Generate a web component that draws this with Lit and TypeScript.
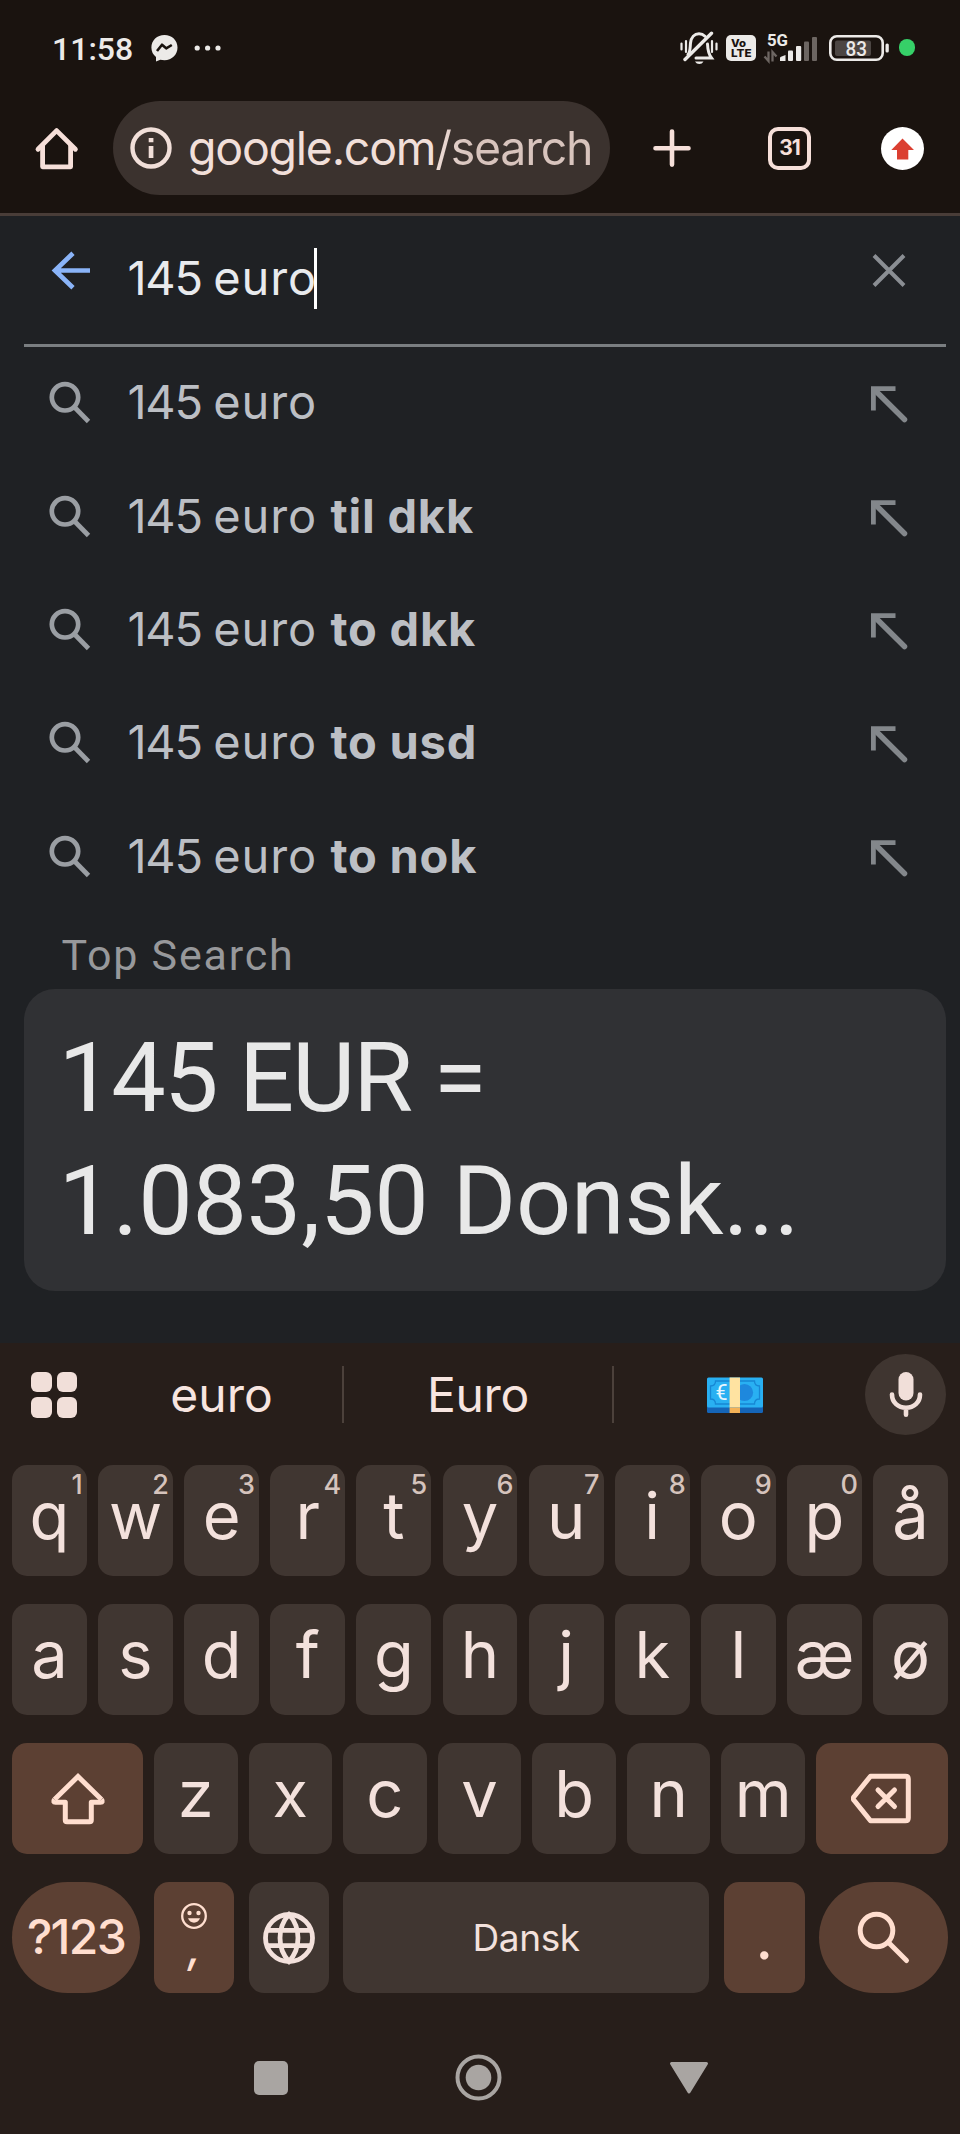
import { LitElement, html, css, nothing } from 'lit';
import { customElement, property } from 'lit/decorators.js';

const INTER = css`"Inter", "Roboto", sans-serif`;
const ROBOTO = css`"Roboto", "Inter", sans-serif`;

@customElement('status-bar')
class StatusBar extends LitElement {
  static styles = css`
    :host { display: flex; align-items: center; height: 95px; padding: 0 45px 0 52px; box-sizing: border-box; color: #eceae8; }
    svg { display: block; flex: none; }
    .time { font: 500 32px/40px ${ROBOTO}; width: 99px; padding-top: 3px; }
    .dots { margin-left: 16px; }
    .spacer { flex: 1; }
    .volte { margin-left: 8px; }
    .signal { margin-left: 7px; }
    .battery { margin-left: 10px; }
    .dot { width: 16.5px; height: 16.5px; border-radius: 50%; background: #36d068; margin-left: 10px; }
    .vo { font: 800 10.5px ${INTER}; }
    .g5 { font: 700 16.5px ${ROBOTO}; }
    .lvl { font: 500 20.5px ${ROBOTO}; }
  `;
  render() {
    return html`
      <div class="time">11:58</div>
      <svg width="27" height="28" viewBox="0 0 27 28">
        <path fill="#eceae8" d="M13.5 1C6 1 .4 6.400.4 13.600c0 4 1.700 7.200 4.600 9.500v4.300l4.300-1.600c1.300.3 2.700.5 4.200.5 7.400 0 13-5.400 13-12.700S20.900 1 13.500 1z"/>
        <path d="M6 17l5-6.300 4.200 3.600 5.600-3.300" fill="none" stroke="#1a130f" stroke-width="2.600" stroke-linejoin="round"/>
      </svg>
      <svg class="dots" width="28" height="6" viewBox="0 0 28 6" fill="#eceae8">
        <circle cx="3.200" cy="3" r="2.600"/><circle cx="13.600" cy="3" r="2.600"/><circle cx="24" cy="3" r="2.600"/>
      </svg>
      <div class="spacer"></div>
      <svg width="38" height="34" viewBox="0 0 38 34" fill="none" stroke="#eceae8" stroke-width="3" stroke-linecap="round">
        <path d="M8 23.500c2.500-3 2-6.500 2.500-11.500.6-5.500 4-9.300 8.500-9.300 2.500 0 4.500 1 6 2.500"/>
        <path d="M27.500 13c.3 7 1 10 4 14H16"/>
        <path d="M5 28.500L31.500 2.200" stroke-width="3.400"/>
        <path d="M15 30.500h8.500c-1 1.700-2.500 2.500-4.200 2.500s-3.300-.8-4.300-2.500z" fill="#eceae8" stroke="none"/>
        <path d="M1.500 12.500v6M6 10v11M32 10v11M36.500 12.500v6" stroke-width="2.200"/>
      </svg>
      <svg class="volte" width="30" height="26" viewBox="0 0 30 26">
        <rect width="30" height="26" rx="5" fill="#eceae8"/>
        <text class="vo" x="5" y="11.500" textLength="15" lengthAdjust="spacingAndGlyphs" fill="#1a130f">Vo</text>
        <text class="vo" x="5" y="21.800" textLength="20.500" lengthAdjust="spacingAndGlyphs" fill="#1a130f">LTE</text>
      </svg>
      <svg class="signal" width="56" height="40" viewBox="0 -6 56 40">
        <text class="g5" x="4" y="12" textLength="21" lengthAdjust="spacingAndGlyphs" fill="#eceae8">5G</text>
        <path d="M5.500 17.500v9.500l-4-4.500M9.500 27.500V18l4 4.500" fill="none" stroke="#6d6662" stroke-width="2.300"/>
        <path d="M17 27v-3q0-1 1-1.300l4.500-1.700v6z" fill="#eceae8"/>
        <rect x="25" y="16.500" width="5" height="10.500" rx="1" fill="#eceae8"/>
        <rect x="33" y="12" width="5.200" height="15" rx="1" fill="#eceae8"/>
        <rect x="41" y="7.500" width="5" height="19.500" rx="1" fill="#6d6662"/>
        <rect x="49" y="3" width="5" height="24" rx="1" fill="#6d6662"/>
      </svg>
      <svg class="battery" width="60" height="26" viewBox="0 0 60 26">
        <rect x="1.300" y="1.300" width="52.400" height="23.400" rx="6.500" fill="none" stroke="#eceae8" stroke-width="2.600"/>
        <rect x="6" y="5.500" width="36" height="15.500" rx="2" fill="#4c4643"/>
        <rect x="56.500" y="8.500" width="3.300" height="9" rx="1.500" fill="#eceae8"/>
        <text class="lvl" x="16.500" y="21" textLength="21.500" lengthAdjust="spacingAndGlyphs" fill="#eceae8">83</text>
      </svg>
      <div class="dot"></div>`;
  }
}

@customElement('browser-bar')
class BrowserBar extends LitElement {
  static styles = css`
    :host { display: flex; align-items: center; height: 121px; box-sizing: border-box; padding: 6px 34px 18px 34px; border-bottom: 3px solid #493d38; }
    svg { display: block; flex: none; }
    .pill { display: flex; align-items: center; width: 497px; height: 94px; border-radius: 47px; background: #3b322e; margin-left: 34px; box-sizing: border-box; padding-left: 17px; }
    .url { font: 400 46.5px/60px ${INTER}; letter-spacing: -1.25px; margin-left: 16px; white-space: nowrap; color: #f1dfd9; }
    .path { background: linear-gradient(90deg, #efddd7, #d8c4bd 22%); -webkit-background-clip: text; background-clip: text; color: transparent; }
    .plus { margin-left: 41.500px; }
    .tabs { display: grid; place-items: center; box-sizing: border-box; width: 43px; height: 43px; border: 4.5px solid #f6dfd9; border-radius: 10px; margin-left: 76.500px; font: 700 21px/24px ${INTER}; letter-spacing: -1px; color: #f6dfd9; }
    .upd { margin-left: 70px; }
  `;
  render() {
    return html`
      <svg width="45" height="45" viewBox="0 0 45 45" fill="none" stroke="#f6dfd9" stroke-width="4.800" stroke-linecap="round" stroke-linejoin="round">
        <path d="M4 23.200L22.600 4.600 41.400 23.200"/><path stroke-linecap="butt" d="M8.600 19V40.800H36.600V19"/>
      </svg>
      <div class="pill">
        <svg width="42" height="42" viewBox="0 0 42 42">
          <circle cx="21" cy="21" r="18.500" fill="none" stroke="#f1dfd9" stroke-width="4.400"/>
          <path d="M18.700 11h4.700v4.300h-4.700zM18.700 19h4.700v12h-4.700z" fill="#f1dfd9"/>
        </svg>
        <div class="url">google.com<span class="path">/search</span></div>
      </div>
      <svg class="plus" width="40" height="40" viewBox="0 0 40 40" stroke="#f6dfd9" stroke-width="4.600" stroke-linecap="round"><path d="M20 3.600v33M3.500 20.200h33"/></svg>
      <div class="tabs">31</div>
      <svg class="upd" width="43" height="43" viewBox="0 0 43 43">
        <circle cx="21.500" cy="21.500" r="21.500" fill="#fff"/>
        <path d="M21.500 11.500L33 23h-5.700v9.500H16V23h-5.700z" fill="#db3f31"/>
      </svg>`;
  }
}

const SUGGESTIONS = ['', 'til dkk', 'to dkk', 'to usd', 'to nok'];

@customElement('search-page')
class SearchPage extends LitElement {
  static styles = css`
    :host { display: flex; flex-direction: column; height: 1127px; background: #1f2124; box-sizing: border-box; padding: 0 14px 0 24px; }
    svg { display: block; flex: none; }
    .head { display: flex; align-items: center; height: 131px; box-sizing: border-box; border-bottom: 3px solid #7a7e81; padding: 0 40px 18px 26px; }
    .input { display: flex; align-items: center; font: 400 47px/60px ${INTER}; color: #e8eaed; margin-left: 35.500px; padding-top: 14px; flex: 1; }
    .query { white-space: pre; word-spacing: -2.500px; letter-spacing: .9px; }
    .amount { letter-spacing: -1.300px; }
    .caret { width: 3px; height: 61px; background: #fff; margin-left: -3px; }
    .list { margin-top: -1.300px; }
    .row { display: flex; align-items: center; height: 113.350px; padding: 0 38px 0 25px; color: #bcbfc4; }
    .q { flex: 1; font: 400 47px/60px ${INTER}; margin-left: 35.500px; white-space: pre; }
    .q b { font-weight: 700; font-size: 47px; letter-spacing: .8px; }
    .fill { margin-top: 4px; }
    .label { font: 400 43px/50px ${ROBOTO}; letter-spacing: 1.800px; color: #97989b; padding-left: 37.500px; margin-top: 17.500px; }
    .card { background: #303134; border-radius: 31px; height: 302px; margin-top: 9px; box-sizing: border-box; padding: 28px 0 0 34.500px; font: 400 97px/122.600px ${ROBOTO}; letter-spacing: -.2px; color: #e8e8e8; }
    .first { letter-spacing: -1.800px; }
  `;
  render() {
    const query = html`<span class="query"><span class="amount">145</span> euro</span>`;
    return html`
      <div class="head">
        <svg width="42" height="42" viewBox="0 0 42 42" fill="none" stroke="#8ab4f8" stroke-width="4.700"><path d="M40 20.500H5M23 3.200L5 20.500 23 37.800"/></svg>
        <div class="input">${query}<span class="caret"></span></div>
        <svg width="34" height="34" viewBox="0 0 34 34" stroke="#8a8e93" stroke-width="4"><path d="M2 1.500l30 30M32 1.500L2 31.500"/></svg>
      </div>
      <div class="list">
        ${SUGGESTIONS.map((s) => html`
          <div class="row">
            <svg width="43" height="44" viewBox="0 0 43 44" fill="none" stroke="#9a9ea3" stroke-width="4.700">
              <circle cx="16" cy="17.300" r="13.200"/><path d="M25.300 27L39.500 41.500"/>
            </svg>
            <div class="q">${query}${s ? html` <b>${s}</b>` : nothing}</div>
            <svg class="fill" width="38" height="38" viewBox="0 0 38 38" fill="none" stroke="#83878b" stroke-width="4.800">
              <path d="M25.500 3.600H3.400V25.500"/><path stroke-width="5.500" stroke-linecap="round" d="M5 5.200L34.500 34.500"/>
            </svg>
          </div>`)}
      </div>
      <div class="label">Top Search</div>
      <div class="card"><div class="first">145 EUR =</div><div>1.083,50 Donsk...</div></div>`;
  }
}

@customElement('key-cap')
class KeyCap extends LitElement {
  @property() label = '';
  @property() hint = '';
  static styles = css`
    :host { display: flex; position: relative; align-items: center; justify-content: center; box-sizing: border-box; min-width: 0; padding-bottom: 9.500px; background: #403631; border-radius: 15px; color: #f3e1dc; font: 400 65px/80px ${INTER}; }
    .hint { position: absolute; top: 3px; right: 4px; font: 500 27px/33px ${INTER}; color: #d5c3bc; }
  `;
  render() {
    return html`${this.label}${this.hint ? html`<span class="hint">${this.hint}</span>` : nothing}`;
  }
}

@customElement('soft-keyboard')
class SoftKeyboard extends LitElement {
  static styles = css`
    :host { display: block; height: 791px; background: #271e1a; }
    svg { display: block; flex: none; }
    .strip { display: flex; align-items: center; height: 103px; padding: 0 14px 0 31px; box-sizing: border-box; color: #f7e5e0; font: 400 48px/60px ${INTER}; }
    .apps { display: grid; grid-template-columns: 20.500px 20.500px; gap: 5px; margin-right: 24px; }
    .apps i { height: 20.500px; border-radius: 6px; background: #f1dfd9; }
    .word { display: flex; justify-content: center; align-items: center; width: 241px; box-sizing: border-box; }
    .word.mid { width: 268px; letter-spacing: -.3px; }
    .sep { width: 2px; height: 57px; background: #4c413b; }
    .mic { display: grid; place-items: center; width: 81px; height: 81px; border-radius: 50%; background: #3f3530; margin-left: auto; }
    .keys { display: grid; gap: 28.300px; padding: 19px 12px 0; }
    .row { display: grid; height: 110.800px; }
    .r11 { grid-template-columns: repeat(11, 1fr); column-gap: 11.300px; }
    .r9 { grid-template-columns: 131px repeat(7, 1fr) 132px; column-gap: 11px; }
    .rb { grid-template-columns: 128px 80px 80px 1fr 81px 129px; column-gap: 14.300px; }
    .key { display: flex; align-items: center; justify-content: center; background: #403631; border-radius: 15px; color: #f3e1dc; }
    .accent { background: #5c4033; color: #ffdecf; }
    .pill { border-radius: 56px; }
    .num { font: 500 48px/60px ${INTER}; letter-spacing: -1.700px; padding-bottom: 1px; box-sizing: border-box; }
    .space { font: 400 37px/46px ${INTER}; letter-spacing: -.4px; }
    .comma { flex-direction: column; justify-content: flex-start; font: 500 44px/34px ${INTER}; padding-top: 19.500px; box-sizing: border-box; }
    .comma span { font-style: italic; }
    .dot { font: 400 66px/60px "Lato", sans-serif; padding-bottom: 7px; box-sizing: border-box; }
    .nav { display: flex; justify-content: space-between; align-items: center; height: 48px; margin: 60.500px 251px 0 254px; }
    .sq { width: 34px; height: 34px; border-radius: 5px; background: #a9a5a2; }
  `;
  render() {
    return html`
      <div class="strip">
        <div class="apps"><i></i><i></i><i></i><i></i></div>
        <div class="word">euro</div><div class="sep"></div>
        <div class="word mid">Euro</div><div class="sep"></div>
        <div class="word">
          <svg width="56" height="36" viewBox="0 0 56 36">
            <rect y="3" width="56" height="33" rx="1.500" fill="#1565b8"/>
            <rect y=".5" width="56" height="30" rx="1.500" fill="#29b0f2"/>
            <path d="M8.500 4h39q0 5 5 5v13q-5 0-5 5h-39q0-5-5-5V9q5 0 5-5z" fill="none" stroke="#1787d4" stroke-width="1.300"/>
            <circle cx="37.500" cy="15.500" r="8.600" fill="#1e88dd"/>
            <rect x="22.600" y=".5" width="10.400" height="30" fill="#ffe3a1"/>
            <rect x="22.600" y="30.500" width="10.400" height="5.500" fill="#f4b257"/>
            <text x="8.500" y="23.300" font-family="Roboto, sans-serif" font-size="21.500" fill="#e8f6ff">€</text>
          </svg>
        </div>
        <div class="mic">
          <svg width="36" height="48" viewBox="0 0 36 48">
            <rect x="10.500" y="1" width="15" height="28.500" rx="7.500" fill="#f1dfd9"/>
            <path d="M4 23.500c0 8 6.200 13.300 14 13.300s14-5.300 14-13.300M18 37v6.800" fill="none" stroke="#f1dfd9" stroke-width="4.600" stroke-linecap="round"/>
          </svg>
        </div>
      </div>
      <div class="keys">
        <div class="row r11">${[...'qwertyuiopå'].map((k, i) => html`<key-cap label=${k} hint=${i < 10 ? String((i + 1) % 10) : ''}></key-cap>`)}</div>
        <div class="row r11">${[...'asdfghjklæø'].map((k) => html`<key-cap label=${k}></key-cap>`)}</div>
        <div class="row r9">
          <div class="key accent">
            <svg width="58" height="58" viewBox="0 0 58 58" fill="none" stroke="#ffdecf" stroke-width="5" stroke-linejoin="round">
              <path stroke-linejoin="miter" d="M5.500 29.500L29 6.500 52.500 29.500"/>
              <path d="M5.500 29.500Q3.600 32.300 6.500 32.300H16.300V50Q16.300 51.800 18 51.800H40.500Q42.300 51.800 42.300 50V32.300H51.500Q54.400 32.300 52.500 29.500"/>
            </svg>
          </div>
          ${[...'zxcvbnm'].map((k) => html`<key-cap label=${k}></key-cap>`)}
          <div class="key accent">
            <svg width="62" height="52" viewBox="0 0 62 52" fill="none" stroke="#ffdecf" stroke-width="5" stroke-linejoin="round" stroke-linecap="round">
              <path d="M19.500 3.200H54.500Q57.300 3.200 57.300 6V45Q57.300 47.800 54.500 47.800H19.500L2.800 27Q1.800 25.500 2.800 24z"/>
              <path d="M27 17L43.500 33.500M43.500 17L27 33.500"/>
            </svg>
          </div>
        </div>
        <div class="row rb">
          <div class="key accent pill num">?123</div>
          <div class="key accent comma">
            <svg width="28" height="28" viewBox="0 0 28 28">
              <circle cx="14" cy="14" r="11.800" fill="none" stroke="#ffdecf" stroke-width="2.300"/>
              <circle cx="9.500" cy="11" r="2.200" fill="#ffdecf"/><circle cx="18.500" cy="11" r="2.200" fill="#ffdecf"/>
              <path d="M8 16.300h12c-1 2.800-3.200 4.400-6 4.400s-5-1.600-6-4.400z" fill="#ffdecf"/>
            </svg>
            <span>,</span>
          </div>
          <div class="key">
            <svg width="54" height="54" viewBox="0 0 54 54" fill="none" stroke="#f3e1dc" stroke-width="4.800">
              <circle cx="27" cy="27" r="23.500"/>
              <path d="M27 3.500c-5.500 6-9 14-9 23.500s3.500 17.500 9 23.500c5.500-6 9-14 9-23.500s-3.500-17.500-9-23.500zM5 19.300h44M5 34.700h44"/>
            </svg>
          </div>
          <div class="key space">Dansk</div>
          <div class="key accent dot">.</div>
          <div class="key accent pill">
            <svg width="54" height="54" viewBox="0 0 54 54" fill="none" stroke="#ffdecf" stroke-width="5" stroke-linecap="round">
              <circle cx="19.500" cy="19.500" r="16.300"/><path d="M31.500 31.500L49.500 49.500"/>
            </svg>
          </div>
        </div>
      </div>
      <div class="nav">
        <div class="sq"></div>
        <svg width="47" height="47" viewBox="0 0 47 47"><circle cx="23.500" cy="23.500" r="21" fill="none" stroke="#a9a5a2" stroke-width="4"/><circle cx="23.500" cy="23.500" r="12.800" fill="#a9a5a2"/></svg>
        <svg width="40" height="34" viewBox="0 0 40 34"><path d="M2.500 2.500h35L20 31z" fill="#a9a5a2" stroke="#a9a5a2" stroke-width="3" stroke-linejoin="round"/></svg>
      </div>`;
  }
}

@customElement('app-root')
class AppRoot extends LitElement {
  static styles = css`
    :host { display: block; width: 960px; height: 2134px; overflow: hidden; background: #1a130f; }
  `;
  render() {
    return html`<status-bar></status-bar><browser-bar></browser-bar><search-page></search-page><soft-keyboard></soft-keyboard>`;
  }
}
